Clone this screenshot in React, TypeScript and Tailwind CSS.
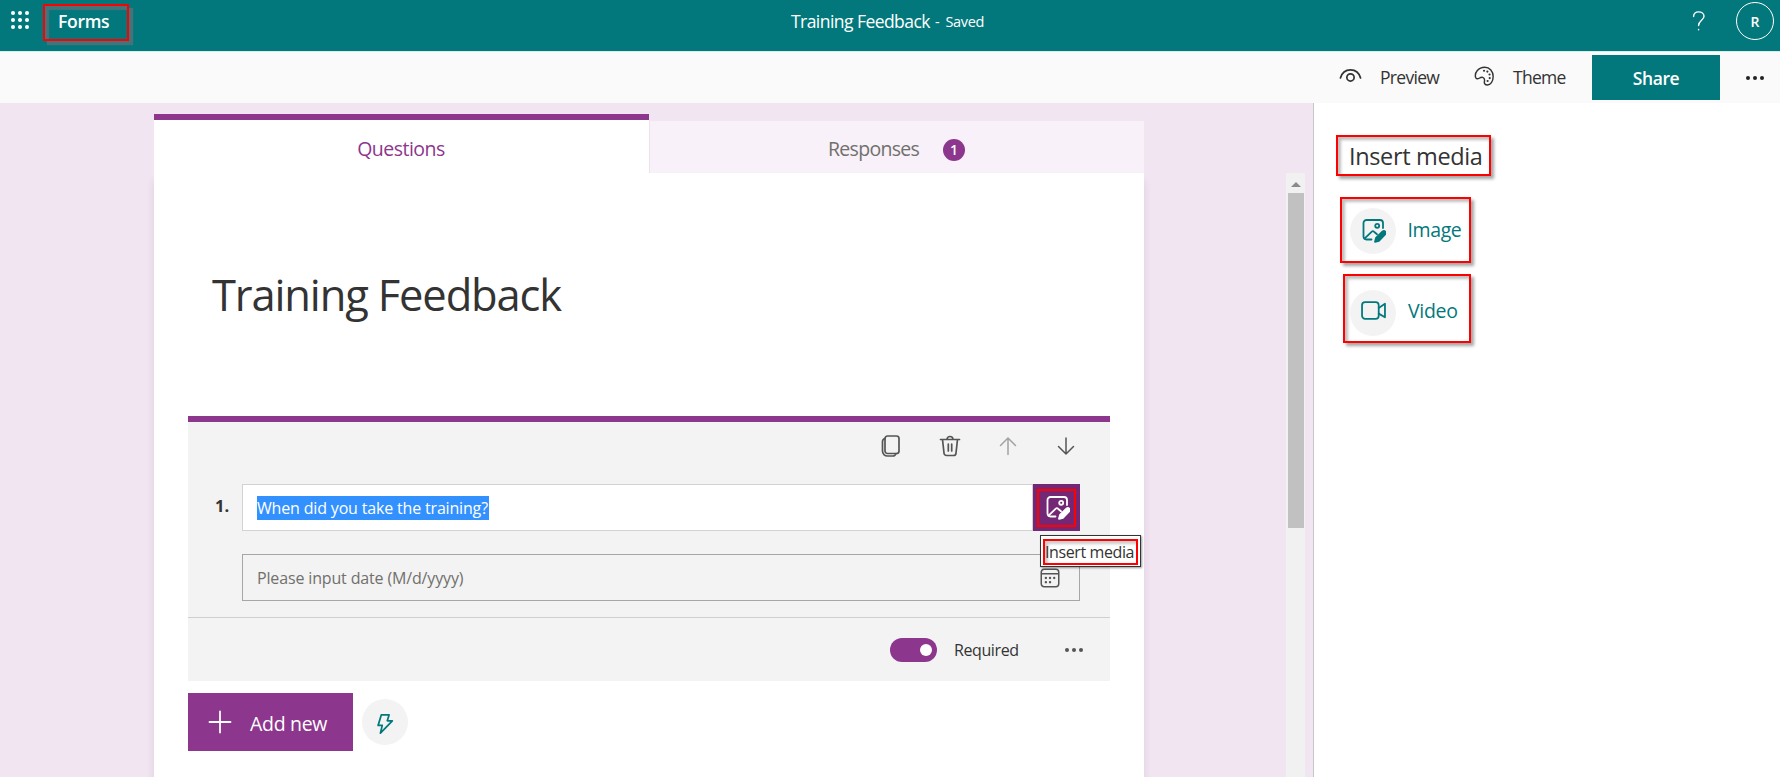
import type { ReactNode } from 'react'

const redShadow = 'border-2 border-[#ff0000] shadow-[3px_3px_3px_rgba(0,0,0,0.35),inset_3px_3px_3px_rgba(0,0,0,0.25)]'

function Waffle() {
  return (
    <div className="grid grid-cols-3 gap-[3px]">
      {Array.from({ length: 9 }, (_, i) => (
        <span key={i} className="size-1 rounded-full bg-white"></span>
      ))}
    </div>
  )
}

function Dots({ className }: { className: string }) {
  return (
    <div className={'flex items-center gap-[3px] ' + className}>
      <span className="size-1 rounded-full bg-current"></span>
      <span className="size-1 rounded-full bg-current"></span>
      <span className="size-1 rounded-full bg-current"></span>
    </div>
  )
}

function Icon({
  children,
  className,
  width = 1.5,
}: {
  children: ReactNode
  className: string
  width?: number
}) {
  return (
    <svg
      viewBox="0 0 24 24"
      fill="none"
      stroke="currentColor"
      strokeWidth={width}
      strokeLinecap="round"
      strokeLinejoin="round"
      className={'shrink-0 ' + className}
    >
      {children}
    </svg>
  )
}

function ImageIcon({ className }: { className: string }) {
  return (
    <Icon className={className} width={1.8}>
      <path d="M9.500 20.500H4.500A3 3 0 0 1 1.500 17.500V4a3 3 0 0 1 3-3h13.500a3 3 0 0 1 3 3v5" />
      <path d="M2.500 19.700l7.300-7a1.600 1.600 0 0 1 2.200 0l3 2.600" />
      <circle cx="15.200" cy="6.800" r="2" />
      <path
        d="M13 22.800l1-3.900 6.600-6.500a2 2 0 0 1 2.800 2.800l-6.500 6.600z"
        fill="currentColor"
      />
    </Icon>
  )
}

export default function App() {
  return (
    <div className="flex h-[777px] w-[1780px] flex-col overflow-hidden bg-white font-['Open_Sans',sans-serif] whitespace-nowrap text-[#333]">
      <Header />
      <Toolbar />
      <div className="flex min-h-0 flex-1">
        <Editor />
        <MediaPanel />
      </div>
    </div>
  )
}

function Header() {
  return (
    <header className="flex h-[51px] shrink-0 bg-[#03787c] text-white">
      <div className="pt-[11px] pl-[11px]">
        <Waffle />
      </div>
      <div className="mt-1 ml-[14px] h-[37px] w-[86px] border-2 border-[#ff0000] pl-[13px] text-[17.5px] leading-[31px] font-semibold tracking-[-0.3px] shadow-[4px_4px_1px_#46737a,inset_4px_4px_1px_#46737a]">
        Forms
      </div>
      <div className="ml-[662px] flex h-[42px] w-[202px] items-center">
        <span className="w-[139px] text-[17.5px] tracking-[-0.55px]">Training Feedback</span>
        <span className="ml-[5px] pt-[2px] text-[14.5px] tracking-[-0.3px]">
          -<span className="ml-[6px]">Saved</span>
        </span>
      </div>
      <Icon className="mt-[11px] ml-[696px] h-[20px] w-[20px]" width={1.7}>
        <path d="M5.5 6.5C5.5 3 8 1 11.5 1S18 3 18 6.3c0 4.7-6.5 5.2-6.5 11.2M11.5 22v.6" />
      </Icon>
      <div className="mt-[1.5px] ml-[27px] flex size-[38px] items-center justify-center rounded-full border border-white pt-px text-[14px] font-semibold">
        R
      </div>
    </header>
  )
}

function Toolbar() {
  return (
    <div className="flex h-[52px] shrink-0 border-t border-[#d8ecec] bg-[#fafafa] pl-[1339px] text-[17.5px] leading-[51px]">
      <Icon className="mt-[12px] h-[24px] w-[23px]" width={1.8}>
        <path d="M1.500 14C3 8.500 7 5.500 12 5.500S21 8.500 22.500 14" />
        <circle cx="12" cy="13.500" r="3.800" />
      </Icon>
      <span className="ml-[18px] w-[94px] tracking-[-0.7px]">Preview</span>
      <Icon className="mt-[14px] h-[20px] w-[20px]" width={1.7}>
        <path d="M2 13.800C.2 8 5.500 1.500 12.800 1.500 19 1.500 23 6.500 23 12.500S19.800 22.800 16 22.800c-2.600 0-4-1.700-3.500-4.200.5-2.400-.1-4.300-2-5-1.500-.5-2.800.2-4.300 1.100-1.700 1-3.500.9-4.200-.9z" />
        <path
          d="M12 5.700h.1M16 6.700h.1M18.600 10.200h.1M18.800 14.500h.1M16.300 18h.1"
          strokeWidth="2.500"
        />
      </Icon>
      <span className="ml-[19px] w-[79px] tracking-[-0.7px]">Theme</span>
      <div className="mt-[3px] h-[45px] w-[128px] bg-[#03787c] text-center leading-[46px] font-semibold tracking-[-0.4px] text-white">
        Share
      </div>
      <Dots className="ml-[26px] text-[#222]" />
    </div>
  )
}

function Editor() {
  return (
    <main className="flex w-[1313px] shrink-0 bg-[#f1e5f2] pl-[154px]">
      <div className="flex w-[990px] flex-col pt-[11px]">
        <div className="flex h-[59px] text-[19.5px]">
          <div className="w-[495px] border-t-6 border-[#8c368d] bg-white pr-px text-center leading-[57px] tracking-[-0.5px] text-[#8c368d]">
            Questions
          </div>
          <div className="mt-[7px] flex flex-1 items-center border-l border-[#ece3ed] bg-[#f8f1f9] pt-[4px] pl-[178px] text-[#70706c]">
            <span className="w-[115px] pb-[1px] tracking-[-0.7px]">Responses</span>
            <span className="mt-px size-[22px] rounded-full bg-[#8c368d] text-center text-[14px] leading-[22px] font-semibold text-white">
              1
            </span>
          </div>
        </div>
        <div className="flex-1 bg-white pl-[34px] shadow-[0_8px_8px_rgba(80,20,80,0.11)]">
          <h1 className="h-[243px] pt-[92px] pl-[24px] text-[43.5px] leading-[60px] font-normal tracking-[-1.15px]">
            Training Feedback
          </h1>
          <Question />
          <div className="mt-3 flex items-center">
            <div className="flex h-[58px] w-[165px] items-center bg-[#8c368d] pl-[20px] text-[19.5px] text-white">
              <Icon className="mr-[18px] size-6" width={1.8}>
                <path d="M1.500 12h21M12 1.500v21" />
              </Icon>
              <span className="pt-[3px] tracking-[-0.3px]">Add new</span>
            </div>
            <div className="ml-[9px] flex size-[46px] items-center justify-center rounded-full bg-[#f3f3f3] pt-[3px] text-[#03787c]">
              <Icon className="size-[22px]" width={1.9}>
                <path d="M8 2h8.500l-2 6.500H20L7 22l2-8.500H4.500z" />
              </Icon>
            </div>
          </div>
        </div>
      </div>
      <div className="mt-[70px] ml-[142px] flex w-[19px] flex-col items-center bg-[#f1f1f1]">
        <span className="mt-[9px] border-x-5 border-b-5 border-x-transparent border-b-[#8a8a8a]"></span>
        <span className="mt-[6px] h-[335px] w-4 bg-[#c1c1c1]"></span>
      </div>
    </main>
  )
}

function Question() {
  return (
    <section className="h-[265px] w-[922px] border-t-6 border-[#8c368d] bg-[#f3f3f3]">
      <div className="flex h-[62px] gap-[34px] pt-[12px] pl-[692px] text-[#555]">
        <Icon className="-ml-px mr-px size-6" width={1.7}>
          <rect x="6" y="2" width="14" height="17.500" rx="2.500" />
          <path d="M6 4.500c-1.500.5-2.500 1.500-2.500 3V17a5 5 0 0 0 5 5H14c1.500 0 2.500-1 3-2.500" />
        </Icon>
        <Icon className="size-6" width={1.7}>
          <path d="M2.500 5.500h19M9 5.500a3 3 0 0 1 6 0M4.500 5.500l1.500 13.500a2.500 2.500 0 0 0 2.500 2.500h7a2.500 2.500 0 0 0 2.500-2.500L19.500 5.500M10.300 10v7M13.700 10v7" />
        </Icon>
        <Icon className="size-6 text-[#a3a3a3]">
          <path d="M12 20.500V4M4.500 11.500L12 4l7.500 7.500" />
        </Icon>
        <Icon className="size-6">
          <path d="M12 4v16M4.500 12.500L12 20l7.500-7.500" />
        </Icon>
      </div>
      <div className="flex h-[47px]">
        <span className="w-[54px] pl-[27px] text-[16.5px] leading-[43px] font-bold">1.</span>
        <div className="flex h-[47px] w-[791px] items-center border border-[#d2d2d2] bg-white pl-[14px]">
          <span className="h-[24px] w-[232px] bg-[#3390ff] text-[16px] leading-[25px] tracking-[-0.17px] text-white">
            When did you take the training?
          </span>
        </div>
        <div className="relative h-[47px] w-[47px] bg-[#742774] pt-[5px] pl-[4px] text-white">
          <div className="flex h-[38px] w-[39px] items-center justify-center border-2 border-[#ff0000] pl-[2px]">
            <ImageIcon className="size-6" />
          </div>
          <div className="absolute top-[51px] left-[7px] z-10 h-[32px] w-[101px] border border-[#333] bg-white p-[2px] pt-[3px] text-[#333] shadow-[1px_1px_2px_rgba(0,0,0,0.4)]">
            <div className="h-[26px] border-2 border-[#ff0000] text-[16px] leading-[23px] tracking-[-0.4px] shadow-[inset_3px_3px_3px_rgba(0,0,0,0.2)]">
              Insert media
            </div>
          </div>
        </div>
      </div>
      <div className="mt-[23px] ml-[54px] flex h-[47px] w-[838px] items-center justify-between border border-[#a6a6a6] pr-[19px] pl-[14px] text-[#70706c]">
        <span className="pt-px text-[16px] tracking-[-0.15px]">Please input date (M/d/yyyy)</span>
        <Icon className="size-5 text-[#555]" width={1.8}>
          <rect x="1.500" y="1.500" width="21" height="21" rx="3.500" />
          <path d="M2 7h20" />
          <path d="M7 12h.1M12 12h.1M17 12h.1M7 17h.1M12 17h.1" strokeWidth="2.800" />
        </Icon>
      </div>
      <div className="mt-[16px] flex h-[64px] items-center border-t border-[#cfcfcf] pt-px pl-[702px]">
        <div className="flex h-6 w-[47px] items-center justify-end rounded-full bg-[#8c368d] pr-[5px]">
          <span className="size-3 rounded-full bg-white"></span>
        </div>
        <span className="ml-[17px] w-[111px] text-[16px] tracking-[-0.4px]">Required</span>
        <Dots className="text-[#555]" />
      </div>
    </section>
  )
}

function MediaPanel() {
  return (
    <aside className="flex-1 border-l border-[#c8c8c8] bg-white">
      <div
        className={
          'mt-8 ml-[22px] h-[41px] w-[155px] pl-[11px] text-[23.5px] leading-[38px] tracking-[-0.35px] ' + redShadow
        }
      >
        Insert media
      </div>
      <div
        className={
          'mt-[21px] ml-[26px] flex h-[66px] w-[131px] items-center pl-[8px] text-[19.5px] text-[#03787c] ' + redShadow
        }
      >
        <div className="mt-[2px] flex size-[46px] items-center justify-center rounded-full bg-[#f3f3f3] pl-px">
          <ImageIcon className="size-6" />
        </div>
        <span className="ml-[11.5px] tracking-[-0.4px]">Image</span>
      </div>
      <div
        className={
          'mt-[11px] ml-[29px] flex h-[69px] w-[128px] items-center pl-[5px] text-[19.5px] text-[#03787c] ' + redShadow
        }
      >
        <div className="mt-[9px] flex size-[46px] items-center justify-center rounded-full bg-[#f3f3f3]">
          <Icon className="mb-[5px] size-[25px]" width={1.7}>
            <rect x="1" y="4" width="16" height="16" rx="3" />
            <path d="M17 9.500L23 5.500v13L17 15" />
          </Icon>
        </div>
        <span className="ml-[12px] pt-[4px] tracking-[-0.3px]">Video</span>
      </div>
    </aside>
  )
}
